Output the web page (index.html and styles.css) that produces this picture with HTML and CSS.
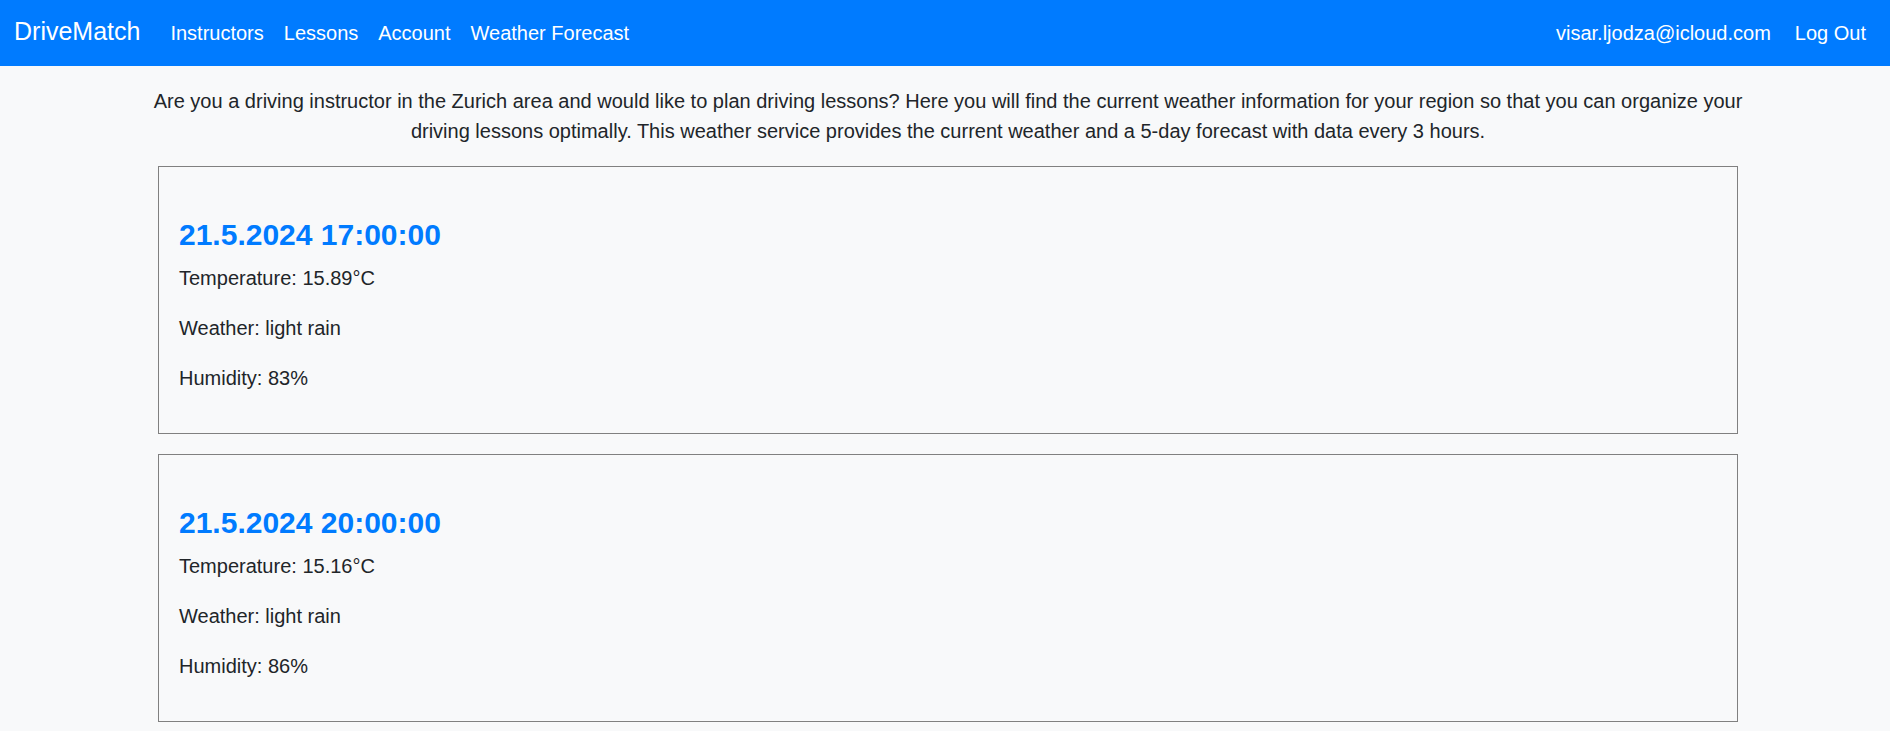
FILE: index.html
```html
<!DOCTYPE html>
<html lang="en">
<head>
<meta charset="utf-8">
<title>DriveMatch – Weather Forecast</title>
<link rel="stylesheet" href="styles.css">
</head>
<body>
<nav class="navbar">
  <a class="brand" href="#">DriveMatch</a>
  <ul class="nav">
    <li><a class="nav-link" href="#">Instructors</a></li>
    <li><a class="nav-link" href="#">Lessons</a></li>
    <li><a class="nav-link" href="#">Account</a></li>
    <li><a class="nav-link" href="#">Weather Forecast</a></li>
  </ul>
  <ul class="nav nav-right">
    <li><a class="nav-link" href="#">visar.ljodza@icloud.com</a></li>
    <li><a class="nav-link" href="#">Log Out</a></li>
  </ul>
</nav>
<main class="main">
  <p class="intro">Are you a driving instructor in the Zurich area and would like to plan driving lessons? Here you will find the current weather information for your region so that you can organize your driving lessons optimally. This weather service provides the current weather and a 5-day forecast with data every 3 hours.</p>
  <div class="card">
    <h4 class="card-title">21.5.2024 17:00:00</h4>
    <p>Temperature: 15.89°C</p>
    <p>Weather: light rain</p>
    <p>Humidity: 83%</p>
  </div>
  <div class="card">
    <h4 class="card-title">21.5.2024 20:00:00</h4>
    <p>Temperature: 15.16°C</p>
    <p>Weather: light rain</p>
    <p>Humidity: 86%</p>
  </div>
</main>
</body>
</html>
```
FILE: styles.css
```css
* { box-sizing: border-box; }
html, body { overflow: hidden; }
body {
  margin: 0;
  background: #f8f9fa;
  color: #212529;
  font-family: "Liberation Sans", Arial, sans-serif;
  font-size: 20px;
  line-height: 1.5;
}
a { text-decoration: none; color: inherit; }

.navbar {
  display: flex;
  align-items: center;
  height: 66px;
  padding: 0 14px 0 14px;
  background: #007bff;
  color: #fff;
}
.brand {
  font-size: 25px;
  line-height: 37px;
  margin-right: 20px;
  padding-bottom: 3px;
}
.nav {
  display: flex;
  list-style: none;
  margin: 0;
  padding: 0;
}
.nav-right { margin-left: auto; gap: 4px; }
.nav-link {
  display: block;
  padding: 0 10px;
  line-height: 30px;
  color: #fff;
}

.main { padding: 0 132px 0 138px; }
.intro {
  margin: 20px 0;
  text-align: center;
}
.card {
  margin: 0 20px 20px;
  padding: 20px 20px;
  border: 1px solid #808080;
}
.card-title {
  margin: 30px 0 10px;
  font-size: 30px;
  line-height: 36px;
  font-weight: bold;
  color: #007bff;
}
.card p { margin: 0 0 20px; }
```
